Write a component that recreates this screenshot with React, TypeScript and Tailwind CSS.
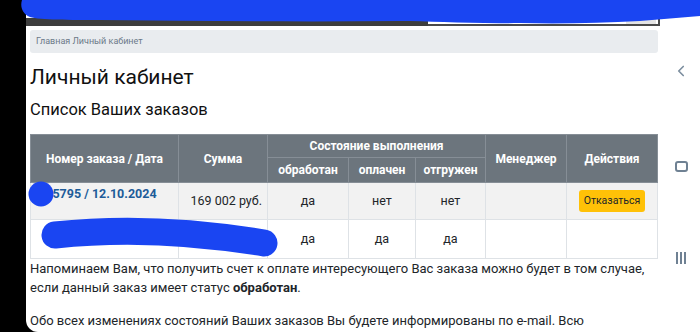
import { ChevronLeft } from 'lucide-react'

const font = { fontFamily: 'Roboto, "Liberation Sans", sans-serif' }

type Order = {
  number: string
  sum: string
  processed: string
  paid: string
  shipped: string
  cancel: boolean
}

const orders: Order[] = [
  { number: '5795 / 12.10.2024', sum: '169 002 руб.', processed: 'да', paid: 'нет', shipped: 'нет', cancel: true },
  { number: '', sum: '', processed: 'да', paid: 'да', shipped: 'да', cancel: false },
]

function TopBar() {
  return (
    <div className="flex h-[26px] items-end">
      <div className="h-[8px] w-[402px] bg-[#3d3d3d]" />
      <div className="flex h-[10px] w-[232px] justify-end border-b-2 border-r-2 border-[#4a4a4a] bg-white">
        <div className="mr-[2px] w-[30px] bg-[#e4e4e4]" />
      </div>
    </div>
  )
}

function OrdersTable() {
  const th = 'border border-[#868e96] bg-[#6c757d] px-1 text-center text-[12px] font-bold text-white'
  const cell = 'border border-[#dee2e6] px-1 text-center text-[12.5px]'
  const td = `${cell} text-[#212529]`
  return (
    <table className="mt-[14px] w-[627px] table-fixed border-collapse">
      <colgroup>
        <col className="w-[148px]" />
        <col className="w-[89px]" />
        <col className="w-[81px]" />
        <col className="w-[67px]" />
        <col className="w-[70px]" />
        <col className="w-[81px]" />
        <col className="w-[91px]" />
      </colgroup>
      <thead>
        <tr className="h-[23px]">
          <th rowSpan={2} className={th}>Номер заказа / Дата</th>
          <th rowSpan={2} className={th}>Сумма</th>
          <th colSpan={3} className={th}>Состояние выполнения</th>
          <th rowSpan={2} className={th}>Менеджер</th>
          <th rowSpan={2} className={th}>Действия</th>
        </tr>
        <tr className="h-[25px]">
          <th className={th}>обработан</th>
          <th className={th}>оплачен</th>
          <th className={th}>отгружен</th>
        </tr>
      </thead>
      <tbody>
        {orders.map((o, i) => (
          <tr key={i} className={i % 2 === 0 ? 'h-[37px] bg-[#f2f2f2]' : 'h-[39px] bg-white'}>
            <td className={`${cell} pt-[2px] align-top font-bold text-[#1d5c99]`}>{o.number}</td>
            <td className={`${td} text-right pr-[5px]`}>{o.sum}</td>
            <td className={td}>{o.processed}</td>
            <td className={td}>{o.paid}</td>
            <td className={td}>{o.shipped}</td>
            <td className={td} />
            <td className={td}>
              {o.cancel && (
                <button className="h-[22px] rounded-[3px] bg-[#ffc107] px-[5px] text-[10.5px] text-[#212529]">
                  Отказаться
                </button>
              )}
            </td>
          </tr>
        ))}
      </tbody>
    </table>
  )
}

function NavBar() {
  return (
    <div className="flex w-[38px] flex-col items-center pt-[62px] text-[#7b8d9e]">
      <ChevronLeft size={18} strokeWidth={2.2} />
      <div className="mt-[81px] h-[11px] w-[13px] rounded-[3px] border-2 border-[#6f8193]" />
      <div className="mt-[80px] flex gap-[2px]">
        <span className="h-[12px] w-[2px] bg-[#6f8193]" />
        <span className="h-[12px] w-[2px] bg-[#6f8193]" />
        <span className="h-[12px] w-[2px] bg-[#6f8193]" />
      </div>
    </div>
  )
}

export default function App() {
  return (
    <div className="relative flex h-[332px] w-[700px] overflow-hidden bg-black" style={font}>
      <div className="w-[26px]" />
      <div className="flex flex-1 overflow-hidden rounded-bl-[12px] bg-white">
        <div className="w-[636px]">
          <TopBar />
          <div className="pl-[4px] pr-[4px]">
            <div className="mt-[4px] flex h-[23px] items-center rounded-[3px] bg-[#e9ecef] px-[6px] text-[9px] text-[#6c7a89]">
              Главная Личный кабинет
            </div>
            <h1 className="mt-[11px] text-[21px] leading-[26px] text-[#111]">Личный кабинет</h1>
            <h2 className="mt-[10px] text-[16.5px] font-normal leading-[20px] text-[#111]">Список Ваших заказов</h2>
            <OrdersTable />
            <p className="text-[13px] leading-[19px] text-[#212529]">
              Напоминаем Вам, что получить счет к оплате интересующего Вас заказа можно будет в том случае,
              если данный заказ имеет статус <b>обработан</b>.
            </p>
            <p className="mt-[14px] text-[13px] leading-[19px] text-[#212529]">
              Обо всех изменениях состояний Ваших заказов Вы будете информированы по e-mail. Всю
            </p>
          </div>
        </div>
        <NavBar />
      </div>

      {/* redaction scribbles */}
      <svg className="pointer-events-none absolute left-0 top-0" width="700" height="332">
        <path
          d="M22 0 L700 0 L700 16 C680 18 660 19 640 21 C600 23 560 24 520 23 C470 24 430 21 400 21 C300 22 200 21 100 20 C70 20 40 20 30 17 C22 14 20 6 22 0 Z"
          fill="#1a45f2"
        />
        <circle cx="41" cy="194" r="12.5" fill="#1a45f2" />
        <path d="M55 235 C110 229 180 229 264 243" stroke="#1a45f2" strokeWidth="27" strokeLinecap="round" fill="none" />
      </svg>
    </div>
  )
}
